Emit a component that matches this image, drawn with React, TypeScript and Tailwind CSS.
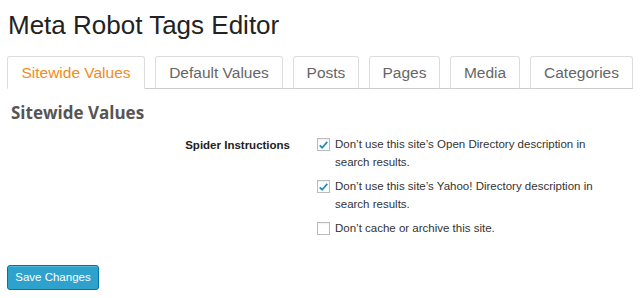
import type { ReactNode } from 'react';

const tabs = [
  { label: 'Sitewide Values', w: 'w-[138px]', active: true },
  { label: 'Default Values', w: 'w-[128px]' },
  { label: 'Posts', w: 'w-[66px]' },
  { label: 'Pages', w: 'w-[71px]' },
  { label: 'Media', w: 'w-[70px]' },
  { label: 'Categories', w: 'w-[103px]' },
];

function Check({ checked, children }: { checked?: boolean; children: ReactNode }) {
  return (
    <label className="flex items-start gap-[5px]">
      <span className="mt-[3px] flex h-[13px] w-[13px] shrink-0 items-center justify-center border border-[#bbb] bg-white shadow-[inset_0_1px_2px_rgba(0,0,0,0.07)]">
        {checked && (
          <svg viewBox="0 0 16 16" className="h-[12px] w-[12px]">
            <path d="M2.5 8.5 L6 12 L13.5 3.5" fill="none" stroke="#1e8cbe" strokeWidth="2.6" />
          </svg>
        )}
      </span>
      <span className="w-[270px] text-[11.5px] leading-[18px] text-[#333]">{children}</span>
    </label>
  );
}

export default function App() {
  return (
    <div className="h-[298px] w-[640px] bg-white font-['Liberation_Sans',Arial,sans-serif]">
      <h2 className="px-[8px] pt-[9px] text-[26px] leading-[33px] text-[#222]">Meta Robot Tags Editor</h2>

      <div className="mx-[7px] mt-[14px] flex gap-[10px] border-b border-[#ccc]">
        {tabs.map((t) => (
          <div
            key={t.label}
            className={`${t.w} -mb-px flex h-[33px] items-center justify-center rounded-t-[3px] border border-[#ddd] pt-[1px] text-[15.5px] ${
              t.active ? 'border-b-white bg-white text-[#f18b1d]' : 'border-b-[#ccc] bg-white text-[#666]'
            }`}
          >
            {t.label}
          </div>
        ))}
      </div>

      <h3 className="px-[11px] pt-[13px] font-['Open_Sans',sans-serif] text-[17px] font-bold leading-[22px] text-[#555]">
        Sitewide Values
      </h3>

      <div className="mt-[9px] flex">
        <div className="w-[290px] pt-[3px] text-right text-[11.5px] font-bold leading-[18px] text-[#222]">Spider Instructions</div>
        <div className="ml-[27px] flex flex-col gap-[6px] pt-[2px]">
          <Check checked>Don’t use this site’s Open Directory description in search results.</Check>
          <Check checked>Don’t use this site’s Yahoo! Directory description in search results.</Check>
          <Check>Don’t cache or archive this site.</Check>
        </div>
      </div>

      <div className="px-[7px] pt-[27px]">
        <button className="h-[25px] w-[92px] rounded-[3px] border border-[#0074a2] bg-[#2ea2cc] text-[11.5px] text-white shadow-[inset_0_1px_0_rgba(120,200,230,0.5)]">
          Save Changes
        </button>
      </div>
    </div>
  );
}
